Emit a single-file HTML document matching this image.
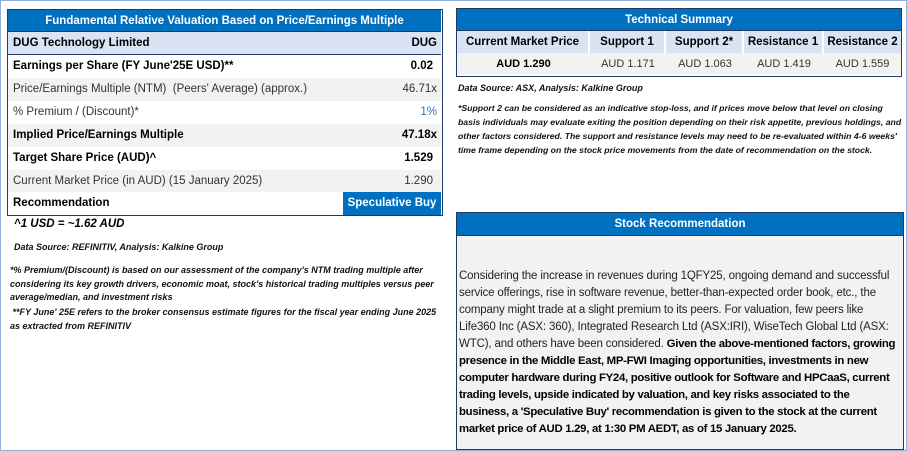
<!DOCTYPE html>
<html><head><meta charset="utf-8"><style>
*{margin:0;padding:0;box-sizing:border-box}
body{width:907px;height:451px;background:#fff;font-family:"Liberation Sans",sans-serif;position:relative;overflow:hidden;border:1px solid #8fb0d8}
.abs{position:absolute}
.hdr{background:#0070c0;color:#fff;font-weight:bold;text-align:center;font-size:11.5px}
.lt{left:6px;top:8px;width:436px;border:1.5px solid #203864;overflow:hidden}
.row{position:absolute;left:0;width:433px;height:23px;font-size:11.5px;line-height:23px;padding:0 5px;color:#000}
.row span{position:absolute;right:4px;top:0}
.b{font-weight:bold}
.g{color:#333}
.it{font-style:italic;font-weight:bold;font-size:9px;color:#111}
</style></head><body>
<div class="abs lt" style="height:207px">
 <div class="hdr abs" style="left:0;top:0;width:433px;height:22px;line-height:22px;border-bottom:1.5px solid #203864">Fundamental Relative Valuation Based on Price/Earnings Multiple</div>
 <div class="row b" style="top:22px;background:#dae3f3;border-bottom:1px solid #203864">DUG Technology Limited<span>DUG</span></div>
 <div class="row b" style="top:45px;background:#fff">Earnings per Share (FY June'25E USD)**<span style="right:8px">0.02</span></div>
 <div class="row g" style="top:68px;background:#f2f2f2">Price/Earnings Multiple (NTM)&nbsp; (Peers' Average) (approx.)<span>46.71x</span></div>
 <div class="row g" style="top:91px;background:#fff">% Premium / (Discount)*<span style="color:#2e75b6">1%</span></div>
 <div class="row b" style="top:114px;background:#f2f2f2">Implied Price/Earnings Multiple<span>47.18x</span></div>
 <div class="row b" style="top:137px;background:#fff">Target Share Price (AUD)^<span style="right:8px">1.529</span></div>
 <div class="row g" style="top:160px;background:#f2f2f2">Current Market Price (in AUD) (15 January 2025)<span style="right:8px">1.290</span></div>
 <div class="row b" style="top:182px;background:#fff">Recommendation<span style="right:0;width:98px;background:#0070c0;color:#fff;text-align:center">Speculative Buy</span></div>
</div>
<div class="abs" style="left:13px;top:217px;font-size:11.5px;font-weight:bold;font-style:italic">^1 USD = ~1.62 AUD</div>
<div class="abs it" style="left:13px;top:241px">Data Source: REFINITIV, Analysis: Kalkine Group</div>
<div class="abs it" style="left:9px;top:263px;width:430px;line-height:13.5px">*% Premium/(Discount) is based on our assessment of the company's NTM trading multiple after considering its key growth drivers, economic moat, stock's historical trading multiples versus peer average/median, and investment risks</div>
<div class="abs it" style="left:9px;top:305px;width:430px;line-height:13.5px">&nbsp;**FY June' 25E refers to the broker consensus estimate figures for the fiscal year ending June 2025&nbsp; as extracted from REFINITIV</div>

<div class="abs" style="left:455px;top:7px;width:446px;height:69px;border:1.5px solid #203864">
 <div class="hdr" style="height:22px;line-height:22px;border-bottom:1px solid #203864">Technical Summary</div>
 <div style="display:flex;height:22px;font-weight:bold;font-size:11.5px;line-height:22px;text-align:center;background:#fff">
  <div style="width:131px;background:#dae3f3;margin-right:2px">Current Market Price</div>
  <div style="width:74px;background:#dae3f3;margin-right:2px">Support 1</div>
  <div style="width:76px;background:#dae3f3;margin-right:2px">Support 2*</div>
  <div style="width:78px;background:#dae3f3;margin-right:2px">Resistance 1</div>
  <div style="flex:1;background:#dae3f3">Resistance 2</div>
 </div>
 <div style="display:flex;height:22px;font-size:11px;line-height:22px;text-align:center;background:#f2f2f2;color:#333">
  <div style="width:133px;font-weight:bold;color:#000">AUD 1.290</div>
  <div style="width:76px">AUD 1.171</div>
  <div style="width:78px">AUD 1.063</div>
  <div style="width:80px">AUD 1.419</div>
  <div style="flex:1">AUD 1.559</div>
 </div>
</div>
<div class="abs it" style="left:457px;top:82px">Data Source: ASX, Analysis: Kalkine Group</div>
<div class="abs it" style="left:457px;top:100px;width:445px;line-height:14px;font-size:8.7px">*Support 2 can be considered as an indicative stop-loss, and if prices move below that level on closing basis individuals may evaluate exiting the position depending on their risk appetite, previous holdings, and other factors considered. The support and resistance levels may need to be re-evaluated within 4-6 weeks' time frame depending on the stock price movements from the date of recommendation on the stock.</div>

<div class="abs" style="left:455px;top:211px;width:448px;height:238px;border:1.5px solid #203864;background:#f2f2f2">
 <div class="hdr" style="height:23px;line-height:23px;border-bottom:1.5px solid #203864">Stock Recommendation</div>
 <div style="padding:32px 2px 0 2px;font-size:11.5px;line-height:17px;color:#222;letter-spacing:-0.15px">Considering the increase in revenues during 1QFY25, ongoing demand and successful service offerings, rise in software revenue, better-than-expected order book, etc., the company might trade at a slight premium to its peers. For valuation, few peers like Life360 Inc (ASX: 360), Integrated Research Ltd (ASX:IRI), WiseTech Global Ltd (ASX: WTC), and others have been considered. <b style="color:#000;font-size:11.4px;letter-spacing:-0.3px">Given the above-mentioned factors, growing presence in the Middle East, MP-FWI Imaging opportunities, investments in new computer hardware during FY24, positive outlook for Software and HPCaaS, current trading levels, upside indicated by valuation, and key risks associated to the business, a 'Speculative Buy' recommendation is given to the stock at the current market price of AUD 1.29, at 1:30 PM AEDT, as of 15 January 2025.</b></div>
</div>
</body></html>
